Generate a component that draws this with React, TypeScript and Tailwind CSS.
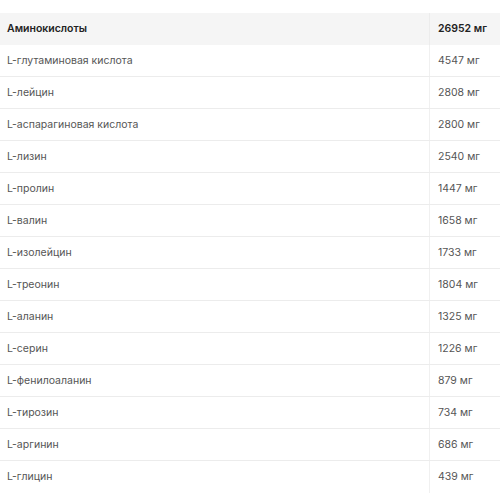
const rows: [string, string][] = [
  ["L-глутаминовая кислота", "4547 мг"],
  ["L-лейцин", "2808 мг"],
  ["L-аспарагиновая кислота", "2800 мг"],
  ["L-лизин", "2540 мг"],
  ["L-пролин", "1447 мг"],
  ["L-валин", "1658 мг"],
  ["L-изолейцин", "1733 мг"],
  ["L-треонин", "1804 мг"],
  ["L-аланин", "1325 мг"],
  ["L-серин", "1226 мг"],
  ["L-фенилоаланин", "879 мг"],
  ["L-тирозин", "734 мг"],
  ["L-аргинин", "686 мг"],
  ["L-глицин", "439 мг"],
];

const App = () => {
  return (
    <div className="w-[500px] h-[500px] bg-white pt-[13px]" style={{ fontFamily: "Inter, 'Noto Sans', sans-serif" }}>
      <div className="flex h-[32px] bg-[#f5f5f5] text-[10.5px] font-semibold text-[#222]">
        <div className="w-[430px] flex items-center px-[7px] border-r border-[#ececec]">Аминокислоты</div>
        <div className="flex-1 flex items-center px-[8px]">26952 мг</div>
      </div>
      {rows.map(([name, value], i) => (
        <div
          key={name}
          className={
            i < rows.length - 1
              ? "flex h-[32px] border-b border-[#ececec] text-[10.5px] text-[#555]"
              : "flex h-[32px] text-[10.5px] text-[#555]"
          }
        >
          <div className="w-[430px] flex items-center px-[7px] border-r border-[#f0f0f0]">{name}</div>
          <div className="flex-1 flex items-center px-[8px]">{value}</div>
        </div>
      ))}
    </div>
  );
};

export default App;
